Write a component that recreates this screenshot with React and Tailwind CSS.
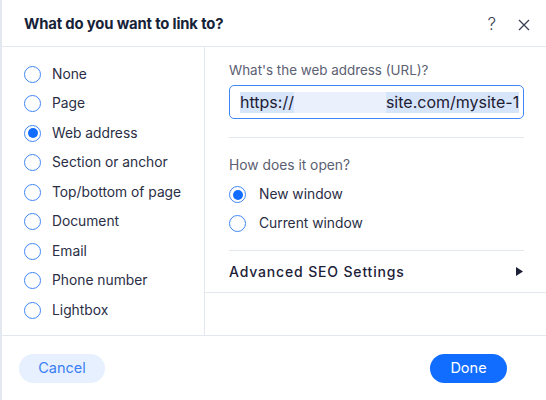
import React, { useState } from 'react';

const linkTypes = [
    'None',
    'Page',
    'Web address',
    'Section or anchor',
    'Top/bottom of page',
    'Document',
    'Email',
    'Phone number',
    'Lightbox',
];

const Radio = ({ checked }) => (
    <span className="w-[17px] h-[17px] rounded-full border-[1.5px] border-[#3f86f6] flex items-center justify-center shrink-0">
        {checked && <span className="w-[10px] h-[10px] rounded-full bg-[#116dff]" />}
    </span>
);

const App = () => {
    const [linkType, setLinkType] = useState('Web address');
    const [openIn, setOpenIn] = useState('new');

    return (
        <div className="w-[546px] h-[400px] bg-white border-l-2 border-[#e3e8ef] text-[#20243a] flex flex-col" style={{ fontFamily: "'Inter', 'Open Sans', sans-serif" }}>
            {/* Header */}
            <div className="h-[47px] border-b border-[#e3e8ef] flex items-center justify-between pl-[22px] pr-[16px] pt-[3px] shrink-0">
                <h2 className="text-[14.8px] font-bold text-[#162238] tracking-[-0.01em]">What do you want to link to?</h2>
                <div className="flex items-center gap-[22px] text-[#3a3f55]">
                    <span className="text-[17px] font-light leading-none">?</span>
                    <svg width="12" height="12" viewBox="0 0 12 12" fill="none" stroke="currentColor" strokeWidth="1.3">
                        <path d="M1 1 L11 11 M11 1 L1 11" />
                    </svg>
                </div>
            </div>

            {/* Body */}
            <div className="flex h-[289px] border-b border-[#e3e8ef] shrink-0">
                <div className="w-[203px] border-r border-[#e3e8ef] pt-[12.5px] pl-[22px]">
                    {linkTypes.map(t => (
                        <button key={t} onClick={() => setLinkType(t)} className="h-[29.5px] flex items-center gap-[11px] w-full text-left">
                            <Radio checked={linkType === t} />
                            <span className="text-[13.8px] text-[#2a2e45]">{t}</span>
                        </button>
                    ))}
                </div>

                <div className="flex-1 self-start border-b border-[#e3e8ef]">
                    <div className="mx-[24px] mr-[22px] pt-[14px] pb-[18px] border-b border-[#e3e8ef]">
                        <p className="text-[13.4px] leading-[18px] text-[#5b6072]">What's the web address (URL)?</p>
                        <div className="mt-[6px] h-[34px] border border-[#3f86f6] rounded-[5px] flex items-center pl-[10px] pr-[3px] overflow-hidden">
                            <div className="flex items-center whitespace-nowrap overflow-hidden text-[16px] text-[#1d2033]">
                                <span className="bg-[#d7e5fb] leading-[21px]">https://</span>
                                <span className="bg-[#eaf1fd] inline-block w-[92px] h-[21px] shrink-0" />
                                <span className="bg-[#d7e5fb] leading-[21px]">site.com/mysite-1</span>
                            </div>
                        </div>
                    </div>

                    <div className="mx-[24px] mr-[22px] pt-[18px] pb-[12px] border-b border-[#e3e8ef]">
                        <p className="text-[13.8px] leading-[18px] text-[#5b6072]">How does it open?</p>
                        <div className="mt-[6px]">
                            <button onClick={() => setOpenIn('new')} className="h-[29px] flex items-center gap-[13px]">
                                <Radio checked={openIn === 'new'} />
                                <span className="text-[13.8px] text-[#2a2e45]">New window</span>
                            </button>
                            <button onClick={() => setOpenIn('current')} className="h-[29px] flex items-center gap-[13px]">
                                <Radio checked={openIn === 'current'} />
                                <span className="text-[13.8px] text-[#2a2e45]">Current window</span>
                            </button>
                        </div>
                    </div>

                    <div className="mx-[24px] mr-[22px] h-[41px] flex items-center justify-between">
                        <span className="text-[14px] font-medium tracking-[0.06em] text-[#1d2138]">Advanced SEO Settings</span>
                        <svg width="7" height="9" viewBox="0 0 7 9" className="mr-[1px]">
                            <path d="M0 0 L7 4.5 L0 9 Z" fill="#1d2138" />
                        </svg>
                    </div>
                </div>
            </div>

            {/* Footer */}
            <div className="flex-1 flex items-center justify-between pl-[17px] pr-[39px]">
                <button className="w-[86px] h-[29px] rounded-full bg-[#e7f0fe] text-[#3b80f4] text-[14.5px]">Cancel</button>
                <button className="w-[77px] h-[29px] rounded-full bg-[#116dff] text-white text-[14.5px]">Done</button>
            </div>
        </div>
    );
};

export default App;
